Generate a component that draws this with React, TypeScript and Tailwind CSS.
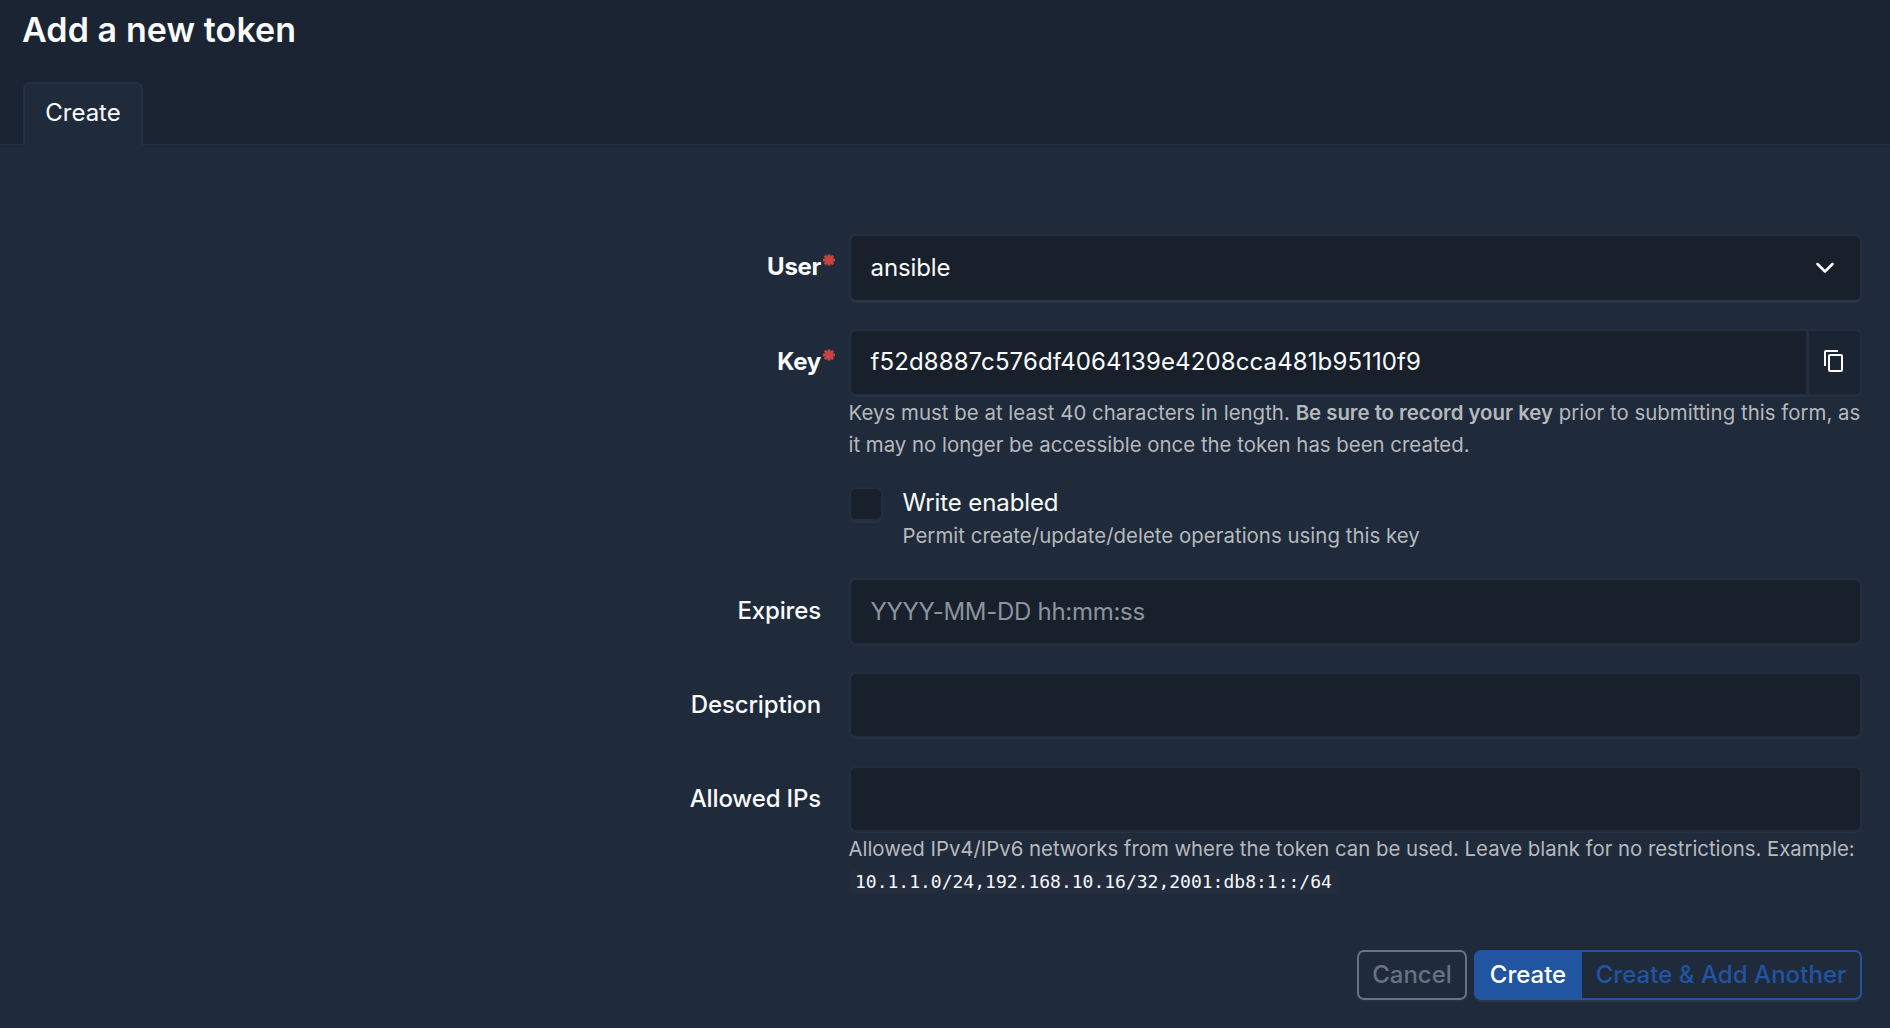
import React from "react";

function Star() {
  return (
    <svg className="absolute left-full top-[4px] ml-[2px]" width="12" height="12" viewBox="0 0 12 12" stroke="#c94440" strokeWidth="2.8">
      <path d="M6 .5v11M0 6h12M1.8 1.8l8.4 8.4M10.2 1.8l-8.4 8.4" />
    </svg>
  );
}

function Label({ children, required = false }: { children: string; required?: boolean }) {
  return (
    <label className={required ? "pt-[16px] text-right font-bold tracking-[-0.3px]" : "pt-[16px] text-right font-medium tracking-[-0.15px]"}>
      <span className="relative inline-block">
        {children}
        {required && <Star />}
      </span>
    </label>
  );
}

const field = "flex w-full items-center rounded-[7px] border-2 border-[#222e40] bg-[#18202b] pl-[19.5px] shadow-[0_1px_0_#263242]";
const row = "grid grid-cols-[821px_1013px] gap-x-[28px]";
const help = "whitespace-nowrap text-[20.4px] leading-[32px] text-[#b5b9be]";

export default function App() {
  return (
    <div className="h-[1028px] w-[1890px] overflow-hidden bg-[#1f2a3a] font-['Inter',sans-serif] text-[24px] leading-[34px] text-[#fafbfc]">
      <header className="h-[145px] border-b border-[#233043] bg-[#1b2432] px-[23px]">
        <h1 className="-ml-[1px] pt-[10px] text-[34px] font-semibold leading-[40px] tracking-[0.1px]">Add a new token</h1>
        <div className="mt-[32px] flex h-[63px] w-[120px] justify-center rounded-t-[7px] border-2 border-b-0 border-[#243044] bg-[#1f2a3a] pt-[12px]">Create</div>
      </header>
      <form className="pt-[89px]">
        <div className={`${row} h-[95px]`}>
          <Label required>User</Label>
          <div className={`${field} h-[68px] justify-between border-b-[#2a3645] pb-px pr-[26px]`}>
            <span className="tracking-[-0.1px]">ansible</span>
            <svg width="18" height="12" viewBox="0 0 18 12" fill="none" stroke="#fff" strokeWidth="2.5" strokeLinecap="round" strokeLinejoin="round"><path d="M1.5 2 9 9.5 16.5 2" /></svg>
          </div>
        </div>
        <div className={`${row} h-[158px]`}>
          <Label required>Key</Label>
          <div>
            <div className={`${field} h-[67px] overflow-hidden`}>
              <span className="flex-1 pb-[2px] tracking-[0.11px]">f52d8887c576df4064139e4208cca481b95110f9</span>
              <span className="flex h-full w-[54px] items-center border-l-[3px] border-[#222e40] bg-[#1b2432] pb-[3px] pl-[13px]">
                <svg width="24" height="24" viewBox="0 0 24 24" fill="#fff"><path d="M19 21H8V7h11m0-2H8a2 2 0 0 0-2 2v14a2 2 0 0 0 2 2h11a2 2 0 0 0 2-2V7a2 2 0 0 0-2-2m-3-4H4a2 2 0 0 0-2 2v14h2V3h12z" /></svg>
              </span>
            </div>
            <p className={`${help} -ml-[0.5px] pt-px`}>
              <span className="tracking-[0.03px]">
                Keys must be at least 40 characters in length. <strong className="font-semibold tracking-[-0.02px]">Be sure to record your key</strong> prior to submitting this form, as
              </span>
              <br />
              it may no longer be accessible once the token has been created.
            </p>
          </div>
        </div>
        <div className="flex h-[91px] pl-[849px]">
          <div className="mr-[19.5px] h-[34px] w-[34px] rounded-[7px] border-2 border-[#222e40] bg-[#18202b] shadow-[0_2px_0_#263242]" />
          <div className="-mt-[1px]">
            <div className="tracking-[-0.1px]">Write enabled</div>
            <p className={`${help} tracking-[0.03px]`}>Permit create/update/delete operations using this key</p>
          </div>
        </div>
        <div className={`${row} h-[94px]`}>
          <Label>Expires</Label>
          <div className={`${field} h-[67px] tracking-[-0.28px] text-[#8b949f]`}>YYYY-MM-DD hh:mm:ss</div>
        </div>
        <div className={`${row} h-[94px]`}>
          <Label>Description</Label>
          <div className={`${field} h-[66px]`} />
        </div>
        <div className={`${row} h-[184px]`}>
          <Label>Allowed IPs</Label>
          <div>
            <div className={`${field} h-[66px]`} />
            <p className={`${help} -ml-[0.5px] pt-px tracking-[-0.03px]`}>Allowed IPv4/IPv6 networks from where the token can be used. Leave blank for no restrictions. Example:</p>
            <code className="mt-[4px] block h-[25px] w-[490px] rounded-[6px] bg-[#222c3d] pl-[6px] font-['DejaVu_Sans_Mono',monospace] text-[18px] leading-[25px] text-[#f6f8fb]">10.1.1.0/24,192.168.10.16/32,2001:db8:1::/64</code>
          </div>
        </div>
        <div className="flex h-[50px] justify-end pr-[28px] font-medium">
          <button type="button" className="mr-[7px] w-[110px] rounded-[7px] border-2 border-[#667382] text-[#667382] shadow-[0_2px_0_#263242]">Cancel</button>
          <button type="button" className="w-[108px] rounded-l-[7px] bg-[#2154a1] text-white shadow-[0_2px_0_#2a3545]">Create</button>
          <button type="button" className="w-[280px] rounded-r-[7px] border-2 border-l-0 border-[#2154a1] tracking-[0.05px] text-[#2154a1] shadow-[0_2px_0_#2a3545]">Create &amp; Add Another</button>
        </div>
      </form>
    </div>
  );
}
